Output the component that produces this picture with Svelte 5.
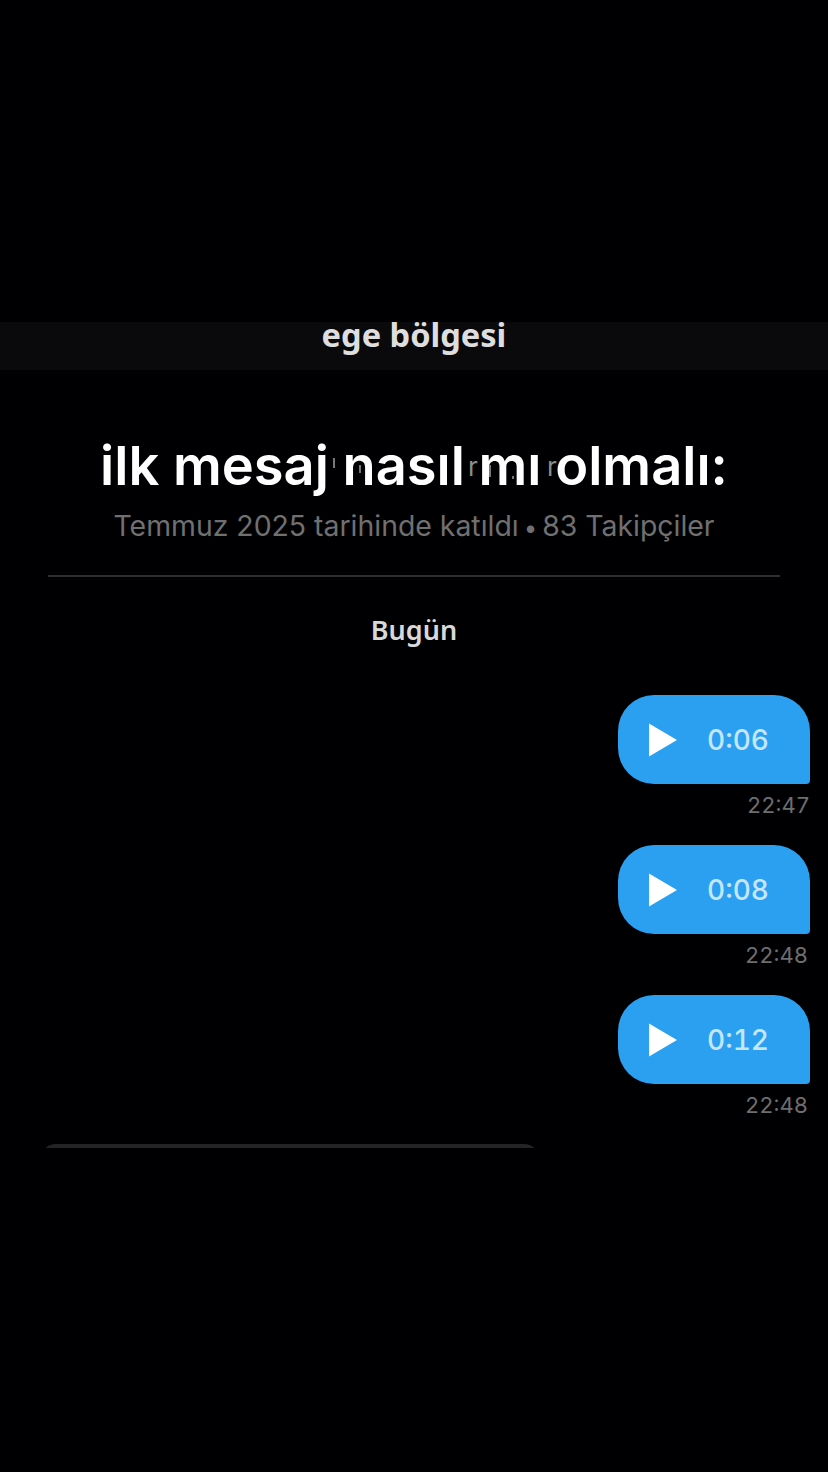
<script lang="ts">
	const messages = [
		{ length: '0:06', time: '22:47', inset: false },
		{ length: '0:08', time: '22:48', inset: true },
		{ length: '0:12', time: '22:48', inset: true }
	];
	// grey bits of the text behind the title that show between its letters
	const marks = [
		{ left: 333, top: 28, height: 10 },
		{ left: 359, top: 35, height: 8 },
		{ left: 489, top: 35, height: 12 },
		{ left: 512, top: 46, height: 3 }
	];
</script>

<div class="page">
	<div class="band"><span>ege bölgesi</span></div>

	<h1>
		ilk mesaj nasıl mı olmalı:
		<span class="ghost" style="left: 468px" aria-hidden="true">r</span>
		<span class="ghost" style="left: 547px" aria-hidden="true">r</span>
		{#each marks as b}
			<i class="mark" style="left: {b.left}px; top: {b.top}px; height: {b.height}px"></i>
		{/each}
	</h1>
	<p class="meta">Temmuz 2025 tarihinde katıldı<span class="dot">•</span>83 Takipçiler</p>
	<div class="rule"></div>
	<div class="day">Bugün</div>

	<div class="thread">
		{#each messages as m}
			<div class="msg">
				<div class="bubble">
					<svg class="play" width="30" height="34" viewBox="0 0 30 34" aria-hidden="true">
						<path d="M1 0.5 L29 17 L1 33.5 Z" fill="#fff" />
					</svg>
					<span class="len">{m.length}</span>
				</div>
				<div class="time" class:inset={m.inset}>{m.time}</div>
			</div>
		{/each}
	</div>

	<div class="composer"><div class="field"></div></div>
</div>

<style>
	:global(body) {
		margin: 0;
		background: #000;
	}
	.page {
		height: 1472px;
		padding-top: 322px;
		box-sizing: border-box;
		background: #000003;
		font-family: Inter, "Liberation Sans", sans-serif;
		overflow: hidden;
	}
	.band {
		height: 48px;
		background: #0a090c;
		overflow: hidden;
		text-align: center;
	}
	.band span {
		display: block;
		font-family: "Noto Sans", sans-serif;
		font-weight: 700;
		font-size: 32.6px;
		line-height: 25px;
		color: #dedede;
	}
	h1 {
		position: relative;
		margin: 60px 0 0;
		font-size: 54.2px;
		line-height: 70px;
		font-weight: 600;
		color: #fff;
		text-align: center;
	}
	.ghost {
		position: absolute;
		top: 22px;
		font-size: 26px;
		line-height: 30px;
		font-weight: 400;
		color: #8c8c8c;
	}
	.mark {
		position: absolute;
		width: 2px;
		background: #77777a;
	}
	.meta {
		margin: 9px 0 0;
		font-size: 28.4px;
		line-height: 34px;
		color: #707070;
		text-align: center;
	}
	.dot {
		font-size: 24px;
		margin: 0 5px;
	}
	.rule {
		height: 2px;
		margin: 30px 48px 0;
		background: #2f2f33;
	}
	.day {
		margin-top: 35px;
		font-family: "Noto Sans", sans-serif;
		font-weight: 600;
		font-size: 27px;
		line-height: 36px;
		color: #d8d8d8;
		text-align: center;
	}
	.thread {
		margin-top: 47px;
		display: flex;
		flex-direction: column;
		gap: 22px;
		padding-right: 18px;
		align-items: flex-end;
	}
	.msg {
		display: flex;
		flex-direction: column;
		align-items: flex-end;
	}
	.bubble {
		width: 192px;
		height: 89px;
		box-sizing: border-box;
		padding-left: 30px;
		display: flex;
		align-items: center;
		gap: 29px;
		background: #2b9ff0;
		border-radius: 36px 36px 4px 36px;
	}
	.len {
		font-size: 28px;
		font-weight: 500;
		color: #c5e6fb;
		font-variant-numeric: tabular-nums;
	}
	.time {
		margin-top: 4px;
		font-size: 22px;
		line-height: 35px;
		color: #6e6e6e;
		font-variant-numeric: tabular-nums;
	}
	.time.inset {
		margin-right: 2px;
	}
	.composer {
		margin: 21px 0 0 40px;
		width: 500px;
		height: 4px;
		overflow: hidden;
	}
	.field {
		height: 40px;
		border-radius: 16px;
		background: #242427;
	}
</style>
